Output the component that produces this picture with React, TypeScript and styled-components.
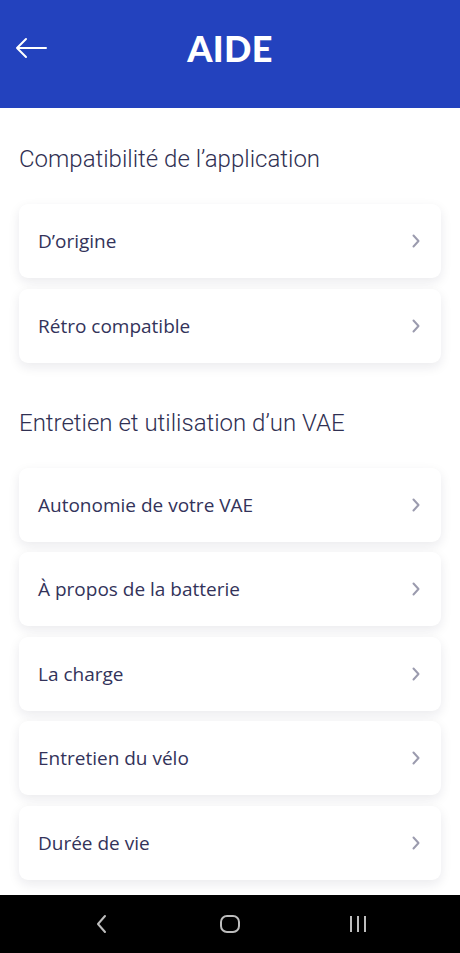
import React from "react";
import styled, { createGlobalStyle } from "styled-components";

const GlobalStyle = createGlobalStyle`
  html, body {
    margin: 0;
    padding: 0;
    background: #ffffff;
  }
  * { box-sizing: border-box; }
`;

const Screen = styled.div`
  width: 460px;
  height: 953px;
  display: flex;
  flex-direction: column;
  overflow: hidden;
  background: #ffffff;
`;

const Header = styled.header`
  height: 108px;
  flex-shrink: 0;
  background: #2342be;
  display: grid;
  grid-template-columns: 60px 1fr 60px;
  align-items: center;
  padding-bottom: 13px;
`;

const BackButton = styled.button`
  border: none;
  background: none;
  padding: 0 0 0 14px;
  display: flex;
  align-items: center;
  cursor: pointer;
`;

const Title = styled.h1`
  margin: 0;
  text-align: center;
  color: #ffffff;
  font-family: Lato, "Open Sans", sans-serif;
  font-weight: 900;
  font-size: 36px;
  letter-spacing: 0.3px;
`;

const Content = styled.main`
  flex: 1;
  overflow: hidden;
  padding: 36px 19px 0;
`;

const SectionTitle = styled.h2<{ $first?: boolean }>`
  margin: ${(p) => (p.$first ? "0" : "45px")} 0 30px;
  font-family: Roboto, "Open Sans", sans-serif;
  font-weight: 300;
  font-size: 24px;
  line-height: 30px;
  color: #303052;
`;

const List = styled.div`
  display: flex;
  flex-direction: column;
  gap: 10.5px;
`;

const Card = styled.div`
  height: 74px;
  background: #ffffff;
  border-radius: 9px;
  box-shadow: 0 4px 12px rgba(20, 20, 50, 0.09);
  display: flex;
  align-items: center;
  justify-content: space-between;
  padding: 0 20px 0 19px;
`;

const CardLabel = styled.span`
  font-family: "Open Sans", sans-serif;
  font-size: 19px;
  color: #33335a;
`;

const NavBar = styled.nav`
  height: 58px;
  flex-shrink: 0;
  background: #000000;
  display: grid;
  grid-template-columns: repeat(3, 128px);
  justify-content: center;
  justify-items: center;
  align-items: center;
`;

const Chevron = () => (
  <svg width="10" height="14" viewBox="0 0 10 14">
    <path d="M2.5 1.5 L7.5 7 L2.5 12.5" fill="none" stroke="#9b9bae" strokeWidth="2" strokeLinecap="round" strokeLinejoin="round" />
  </svg>
);

const ArrowLeft = () => (
  <svg width="34" height="22" viewBox="0 0 34 22">
    <path d="M32 11 H3 M12 2 L3 11 L12 20" fill="none" stroke="#ffffff" strokeWidth="2" strokeLinecap="round" strokeLinejoin="round" />
  </svg>
);

const sections = [
  {
    title: "Compatibilité de l’application",
    items: ["D’origine", "Rétro compatible"],
  },
  {
    title: "Entretien et utilisation d’un VAE",
    items: [
      "Autonomie de votre VAE",
      "À propos de la batterie",
      "La charge",
      "Entretien du vélo",
      "Durée de vie",
    ],
  },
];

export default function App() {
  return (
    <Screen>
      <GlobalStyle />
      <Header>
        <BackButton aria-label="Retour">
          <ArrowLeft />
        </BackButton>
        <Title>AIDE</Title>
        <div />
      </Header>

      <Content>
        {sections.map((section, i) => (
          <section key={section.title}>
            <SectionTitle $first={i === 0}>{section.title}</SectionTitle>
            <List>
              {section.items.map((item) => (
                <Card key={item}>
                  <CardLabel>{item}</CardLabel>
                  <Chevron />
                </Card>
              ))}
            </List>
          </section>
        ))}
      </Content>

      <NavBar>
        <svg width="14" height="22" viewBox="0 0 14 22">
          <path d="M10 3 L3 11 L10 19" fill="none" stroke="#bdbdbd" strokeWidth="2" strokeLinecap="round" strokeLinejoin="round" />
        </svg>
        <svg width="22" height="22" viewBox="0 0 22 22">
          <rect x="2" y="3" width="18" height="16" rx="6" fill="none" stroke="#bdbdbd" strokeWidth="2" />
        </svg>
        <svg width="22" height="22" viewBox="0 0 22 22">
          <path d="M4 3 V19 M11 3 V19 M18 3 V19" fill="none" stroke="#bdbdbd" strokeWidth="2" />
        </svg>
      </NavBar>
    </Screen>
  );
}
